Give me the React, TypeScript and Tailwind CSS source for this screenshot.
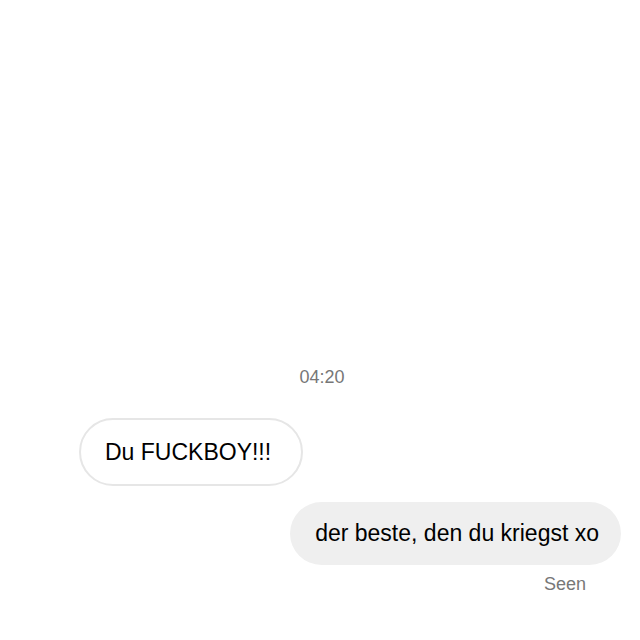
export default function App() {
  return (
    <div className="h-[640px] w-[640px] bg-white flex flex-col justify-end pb-[47px] font-['Liberation_Sans',Arial,sans-serif]">
      <div className="text-center text-[18px] text-[#777] leading-none mb-[32px] pl-[4px]">04:20</div>
      <div className="flex pl-[79px]">
        <div className="h-[68px] flex items-center pl-[24px] pr-[30px] rounded-full border-2 border-[#e6e6e6] text-[23px] text-black">
          Du FUCKBOY!!!
        </div>
      </div>
      <div className="flex justify-end pr-[19px] mt-[16px]">
        <div className="h-[63px] flex items-center pl-[25px] pr-[22px] rounded-full bg-[#efefef] text-[23px] text-black">
          der beste, den du kriegst xo
        </div>
      </div>
      <div className="text-right pr-[54px] mt-[10px] text-[18px] text-[#777] leading-none">Seen</div>
    </div>
  );
}
